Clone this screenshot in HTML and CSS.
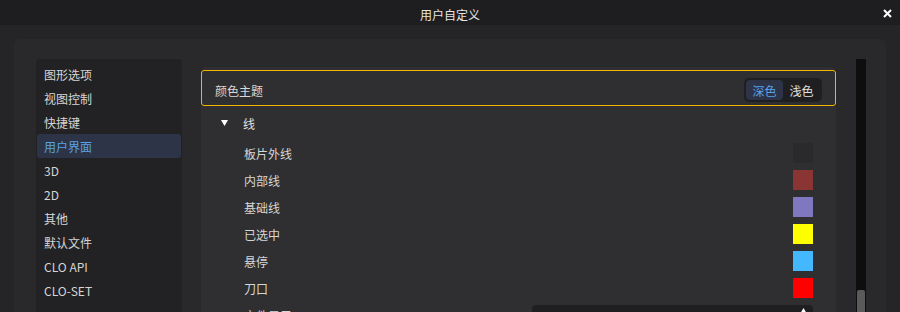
FILE: index.html
```html
<!DOCTYPE html>
<html lang="zh-CN">
<head>
<meta charset="utf-8">
<title>用户自定义</title>
<link rel="stylesheet" href="styles.css">
</head>
<body>
<div class="titlebar">
  <span class="spacer"></span>
  <span class="title">用户自定义</span>
  <span class="close">
    <svg width="9" height="9" viewBox="0 0 9 9"><path d="M1 1 L8 8 M8 1 L1 8" stroke="#ffffff" stroke-width="2" fill="none"/></svg>
  </span>
</div>
<div class="panel">
  <ul class="sidebar">
    <li class="nav">图形选项</li>
    <li class="nav">视图控制</li>
    <li class="nav">快捷键</li>
    <li class="nav active">用户界面</li>
    <li class="nav">3D</li>
    <li class="nav">2D</li>
    <li class="nav">其他</li>
    <li class="nav">默认文件</li>
    <li class="nav">CLO API</li>
    <li class="nav">CLO-SET</li>
  </ul>
  <div class="main">
    <div class="theme-row">
      <span class="label">颜色主题</span>
      <div class="segmented">
        <span class="seg selected">深色</span>
        <span class="seg">浅色</span>
      </div>
    </div>
    <div class="tree-head">
      <svg class="caret" width="7" height="6" viewBox="0 0 7 6"><path d="M0 0 H7 L3.5 6 Z" fill="#ffffff"/></svg>
      <span>线</span>
    </div>
    <div class="row"><span>板片外线</span><span class="swatch sw-dark"></span></div>
    <div class="row"><span>内部线</span><span class="swatch sw-brown"></span></div>
    <div class="row"><span>基础线</span><span class="swatch sw-purple"></span></div>
    <div class="row"><span>已选中</span><span class="swatch sw-yellow"></span></div>
    <div class="row"><span>悬停</span><span class="swatch sw-blue"></span></div>
    <div class="row"><span>刀口</span><span class="swatch sw-red"></span></div>
    <div class="row"><span>文件显示</span>
      <div class="combo"><svg width="7" height="6" viewBox="0 0 7 6"><path d="M0 6 H7 L3.5 0 Z" fill="#ffffff"/></svg></div>
    </div>
  </div>
  <div class="scrollbar"><div class="thumb"></div></div>
</div>
</body>
</html>
```
FILE: styles.css
```css
html, body {
  margin: 0;
  padding: 0;
}
body {
  width: 900px;
  height: 312px;
  overflow: hidden;
  background: #252527;
  font-family: "Noto Sans CJK SC", "Noto Sans", sans-serif;
  font-size: 12px;
  color: #d8d8d8;
}
.titlebar {
  height: 25px;
  background: #1e1e20;
  display: grid;
  grid-template-columns: 1fr auto 1fr;
  align-items: center;
}
.title {
  color: #e6e6e6;
  font-size: 12px;
  line-height: 25px;
  padding-top: 2px;
}
.close {
  justify-self: end;
  padding-right: 8px;
  display: flex;
  align-items: center;
  padding-bottom: 1px;
}
.panel {
  margin: 14px 14px 0 14px;
  height: 300px;
  background: #29292b;
  border-radius: 6px 6px 0 0;
  padding: 20px 20px 0 22px;
  box-sizing: border-box;
  display: flex;
}
.sidebar {
  list-style: none;
  margin: 0;
  padding: 3px 1px;
  width: 146px;
  box-sizing: border-box;
  background: #222224;
  border-radius: 4px 4px 0 0;
  flex: none;
}
.nav {
  height: 24px;
  line-height: 24px;
  padding: 1px 0 0 7px;
  box-sizing: border-box;
  border-radius: 3px;
  color: #d6d6d6;
}
.nav.active {
  background: #2d3447;
  color: #5aa2e8;
}
.main {
  width: 635px;
  margin-left: 19px;
  margin-top: 8px;
  padding-top: 3px;
  background: #2f2f31;
  border-radius: 6px 6px 0 0;
  flex: none;
}
.theme-row {
  height: 36px;
  box-sizing: border-box;
  border: 1px solid #f2b600;
  border-radius: 3px;
  padding: 0 13px;
  display: flex;
  align-items: center;
  justify-content: space-between;
}
.label {
  color: #d8d8d8;
  padding-top: 5px;
}
.segmented {
  display: flex;
  padding: 2px;
  background: #1f1f22;
  border-radius: 5px;
  margin-top: 3px;
}
.seg {
  width: 37px;
  height: 20px;
  line-height: 18px;
  padding-top: 2px;
  box-sizing: border-box;
  text-align: center;
  border-radius: 4px;
  color: #e0e0e0;
}
.seg.selected {
  background: #2d3447;
  color: #5aa2e8;
}
.tree-head {
  height: 27px;
  margin-top: 4px;
  margin-bottom: 2px;
  padding-left: 20px;
  display: flex;
  align-items: center;
  gap: 15px;
  color: #e0e0e0;
}
.caret {
  margin-top: -2px;
}
.row {
  height: 27px;
  padding: 0 23px 0 43px;
  display: flex;
  align-items: center;
  justify-content: space-between;
  color: #d6d6d6;
}
.row span:first-child {
  padding-top: 2px;
}
.swatch {
  width: 20px;
  height: 20px;
}
.sw-dark { background: #2a2a2c; }
.sw-brown { background: #8b3434; }
.sw-purple { background: #7f77c0; }
.sw-yellow { background: #ffff00; }
.sw-blue { background: #43b8ff; }
.sw-red { background: #ff0000; }
.combo {
  width: 281px;
  height: 20px;
  background: #1f1f21;
  border-radius: 4px;
  display: flex;
  justify-content: flex-end;
  padding: 3px 6px 0 0;
  box-sizing: border-box;
}
.scrollbar {
  width: 10px;
  margin-left: 20px;
  background: #0e0e0e;
  flex: none;
  padding-top: 231px;
  box-sizing: border-box;
  display: flex;
  justify-content: center;
}
.thumb {
  width: 8px;
  height: 60px;
  background: #5a5a5a;
  border-radius: 2px;
}
```
